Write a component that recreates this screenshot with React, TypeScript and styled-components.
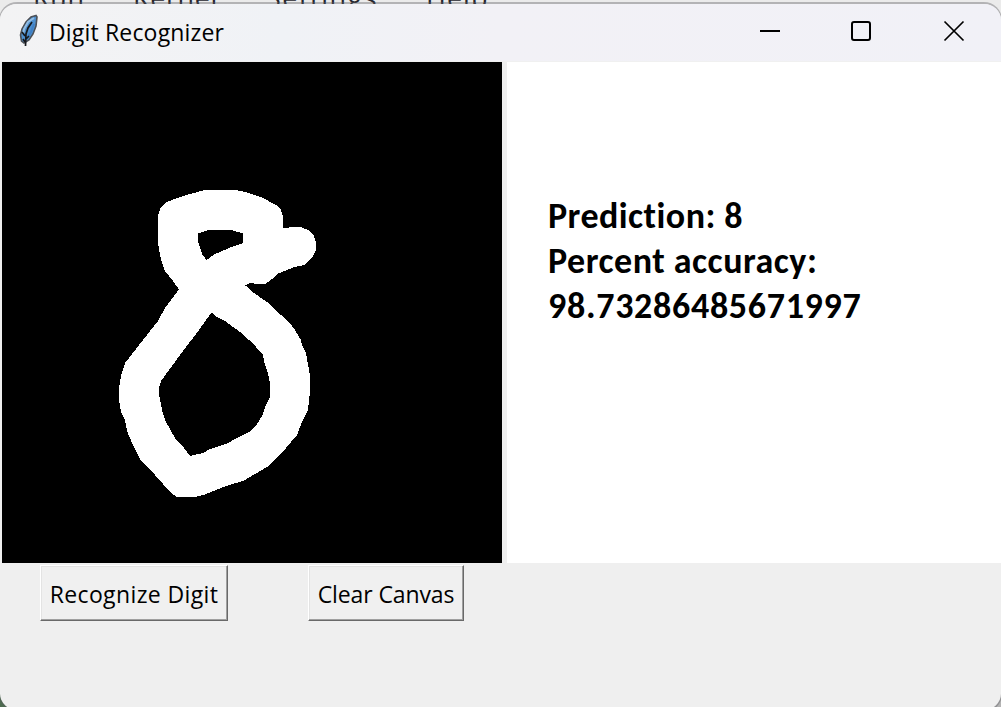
import React from "react";
import styled, { createGlobalStyle } from "styled-components";

const GlobalStyle = createGlobalStyle`
  * { box-sizing: border-box; }
  html, body { margin: 0; background: #fff; overflow: hidden; }
`;

const Desktop = styled.div`
  width: 1001px;
  height: 707px;
  overflow: hidden;
  background: linear-gradient(#ebebeb 0 350px, transparent 350px),
    linear-gradient(90deg, #4d6b4f 0 500px, #b4b4b4 500px);
  font-family: "Open Sans", "Noto Sans", sans-serif;
  color: #000;
`;

const MenuStrip = styled.div`
  display: flex;
  height: 2px;
  padding-left: 33px;
  color: #26262e;
`;

const MenuItem = styled.span<{ $width: number; $spacing: number }>`
  flex: none;
  width: ${(p) => p.$width}px;
  height: 30px;
  margin-top: -17px;
  font-size: 27px;
  line-height: 30px;
  letter-spacing: ${(p) => p.$spacing}px;
  white-space: nowrap;
`;

const Window = styled.section`
  position: relative;
  width: 1003px;
  height: 710px;
  margin-left: -1px;
  border: 2px solid rgba(90, 90, 94, 0.38);
  border-left-width: 1px;
  border-right-width: 1px;
  border-radius: 18px;
  background: #efefef;
  background-clip: padding-box;
  overflow: hidden;
`;

const TitleBar = styled.header`
  display: flex;
  align-items: flex-start;
  height: 58px;
  padding-left: 19px;
  background: linear-gradient(90deg, #f3f3f4, #f0f2f6 28%, #f2f1f6 50%, #f1f1f7);
  border-bottom: 1px solid #f0f0f0;
`;

const Title = styled.h1`
  flex: 1;
  margin: 10px 0 0 10px;
  font-size: 23px;
  font-weight: 400;
  line-height: 36px;
  letter-spacing: 0.17px;
`;

const Feather = styled.svg`
  width: 20px;
  height: 34px;
  margin-top: 10px;
`;

const Controls = styled.div`
  display: grid;
  grid-template-columns: 91px 93px 22px;
  padding: 16px 36px 0 0;
`;

const ControlIcon = styled.svg`
  width: 22px;
  height: 22px;
  fill: none;
  stroke: #000;
  stroke-width: 2;
`;

const Panels = styled.div`
  display: flex;
  gap: 5px;
  height: 501px;
  padding-left: 2px;
`;

const DrawingCanvas = styled.svg`
  flex: none;
  width: 500px;
  height: 501px;
  background: #000;
`;

const Result = styled.div`
  flex: 1;
  padding: 132px 0 0 41px;
  background: #fff;
  font-family: Carlito, Lato, sans-serif;
  font-size: 36px;
  font-weight: 700;
  line-height: 45px;
`;

const ResultLine = styled.div<{ $spacing: number }>`
  letter-spacing: ${(p) => p.$spacing}px;
  white-space: nowrap;
`;

const Actions = styled.div`
  display: flex;
  gap: 80px;
  padding: 2px 0 0 40px;
`;

const ActionButton = styled.button<{ $width: number; $spacing: number }>`
  width: ${(p) => p.$width}px;
  height: 56px;
  padding: 2px 0 0;
  border: 1px solid;
  border-color: #fff #696969 #696969 #fff;
  box-shadow: inset -1px -1px #a0a0a0, inset 1px 1px #e3e3e3;
  background: #f0f0f0;
  color: #000;
  font: 400 23px "Open Sans", "Noto Sans", sans-serif;
  letter-spacing: ${(p) => p.$spacing}px;
  white-space: nowrap;
`;

const OUTLINE =
  "M158 222 158 215 161 207 167 202 180 197 190 194 203 190.5 212 190 236 190 245 192 263 198 276 205 281 210 283 216 283 228.5 292 227 301 227 308 230 314 236 316 243 316 250 312 258 304 265 293 267.5 277 274 272 279 266 283.5 254 283.5 251 282.5 245.5 285.5 254 293 267 302 281 315 290 323 295 330 301 340 302 345 306 353 309 370 310 375 310 390 309 402 307.5 411 302 422 297 435 280 455 267 467 243 481 226 486 205 494.5 197 496.5 176 496.5 170 492 163 484 155 475 145 465 140 459 133 445 127 431 125 420 121 412 119 400 119 388 121 376 125 363 143 340 158 321 165 308 179 289.5 173 281 165 271 162 263 159 250 158 242Z";
const UPPER_HOLE =
  "M198 233 203 232 208 230 232 230 237 232 243 233 243 243 234 246 215 254 206.5 260 202 254 200 247 198 241Z";
const LOWER_HOLE =
  "M211.5 312.5 215 316 225 321 240 332 249 340 256 347 262.5 354 265 365 268 373 270 383 270 397 266 405 263 414 256 426 249 432 237 438 226 444 210 449 203 453 190 456 184 448 175 438 165 420 162.5 412 160 400 159 394 159 388 161 381 180 355 199 330Z";

export default function App() {
  return (
    <>
      <GlobalStyle />
      <Desktop>
        <MenuStrip>
          <MenuItem $width={100} $spacing={0.7}>Run</MenuItem>
          <MenuItem $width={133} $spacing={0.6}>Kernel</MenuItem>
          <MenuItem $width={160} $spacing={1.5}>Settings</MenuItem>
          <MenuItem $width={80} $spacing={1}>Help</MenuItem>
        </MenuStrip>
        <Window>
          <TitleBar>
            <Feather viewBox="0 0 20 34">
              <path
                d="M17 1.5 12 3 7 8 3 15 1.5 21 2.5 27 5 29 10 26 14 20 17 12 18 3Z"
                fill="#4d8fce"
                stroke="#4b5057"
                strokeWidth="1.6"
              />
              <path d="M15 4 9 8 5 15 4 20" fill="none" stroke="#91bce3" strokeWidth="2" />
              <path d="M15 10 12 18 8 24" fill="none" stroke="#3f7fc4" strokeWidth="2" />
              <path
                d="M13 8 9 14 7 20 6.5 32M3 18 6 22M10 22 7 25M4 25 6 28"
                fill="none"
                stroke="#15181d"
                strokeWidth="1.7"
              />
            </Feather>
            <Title>Digit Recognizer</Title>
            <Controls>
              <ControlIcon viewBox="0 0 22 22">
                <path d="M1 11H21" />
              </ControlIcon>
              <ControlIcon viewBox="0 0 22 22">
                <rect x="2" y="2" width="18" height="18" rx="2" />
              </ControlIcon>
              <ControlIcon viewBox="0 0 22 22">
                <path d="M1.5 1.5 20.5 20.5M20.5 1.5 1.5 20.5" strokeWidth="1.7" />
              </ControlIcon>
            </Controls>
          </TitleBar>
          <Panels>
            <DrawingCanvas viewBox="2 62 500 501" shapeRendering="crispEdges">
              <path d={OUTLINE} fill="#fff" />
              <path d={UPPER_HOLE} fill="#000" />
              <path d={LOWER_HOLE} fill="#000" />
            </DrawingCanvas>
            <Result>
              <ResultLine $spacing={0.45}>Prediction: 8</ResultLine>
              <ResultLine $spacing={0.5}>Percent accuracy:</ResultLine>
              <ResultLine $spacing={0.7}>98.73286485671997</ResultLine>
            </Result>
          </Panels>
          <Actions>
            <ActionButton $width={188} $spacing={0.38}>
              Recognize Digit
            </ActionButton>
            <ActionButton $width={156} $spacing={-0.12}>
              Clear Canvas
            </ActionButton>
          </Actions>
        </Window>
      </Desktop>
    </>
  );
}
